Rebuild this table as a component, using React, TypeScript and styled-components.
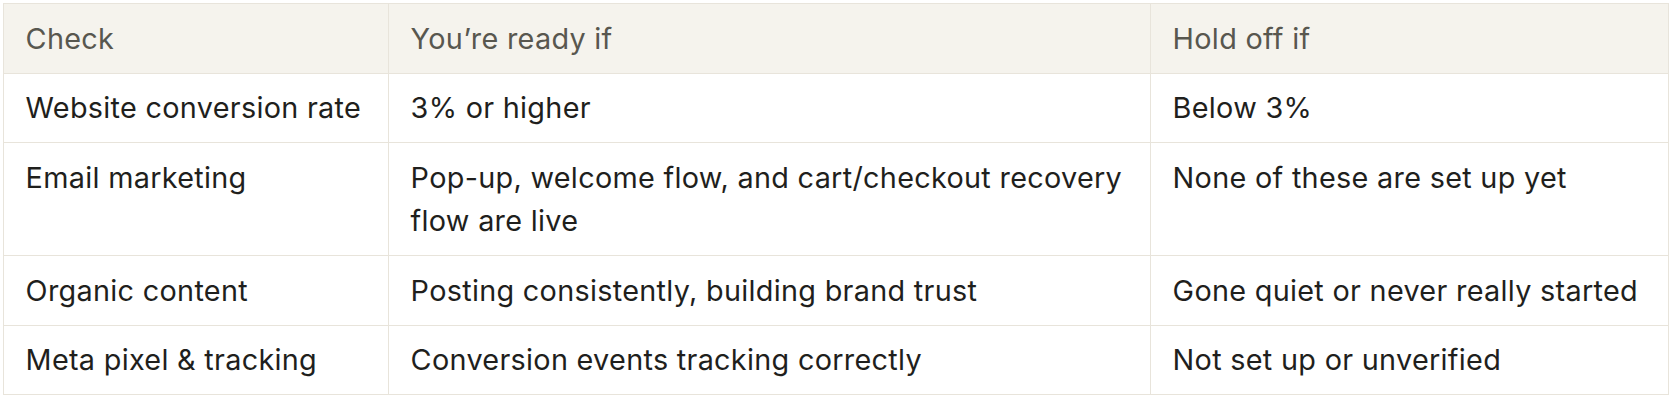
import React from "react";
import styled, { createGlobalStyle } from "styled-components";

const Global = createGlobalStyle`
  html, body { margin: 0; padding: 0; background: #ffffff; }
  body { font-family: Inter, "Liberation Sans", Arial, sans-serif; }
`;

const Wrapper = styled.div`
  padding: 3px 0 0 3px;
  width: 1674px;
  box-sizing: border-box;
`;

const Table = styled.table`
  width: 1665px;
  table-layout: fixed;
  border-collapse: collapse;
  border: 1.8px solid #e8e4db;
  font-size: 28.8px;
  line-height: 43.2px;
  letter-spacing: 0.3px;
`;

const HeadCell = styled.th`
  background: #f5f3ed;
  color: #58574f;
  font-weight: 400;
  text-align: left;
  padding: 12.7px 21.6px;
  border: 1.8px solid #e8e4db;
`;

const Cell = styled.td`
  color: #1f1f1d;
  text-align: left;
  vertical-align: top;
  padding: 12.7px 21.6px;
  border: 1.8px solid #e8e4db;
`;

const rows: [string, string, string][] = [
  ["Website conversion rate", "3% or higher", "Below 3%"],
  [
    "Email marketing",
    "Pop-up, welcome flow, and cart/checkout recovery flow are live",
    "None of these are set up yet",
  ],
  ["Organic content", "Posting consistently, building brand trust", "Gone quiet or never really started"],
  ["Meta pixel & tracking", "Conversion events tracking correctly", "Not set up or unverified"],
];

export default function App() {
  return (
    <Wrapper>
      <Global />
      <Table>
        <colgroup>
          <col style={{ width: 385 }} />
          <col style={{ width: 762 }} />
          <col style={{ width: 518 }} />
        </colgroup>
        <thead>
          <tr>
            <HeadCell>Check</HeadCell>
            <HeadCell>You’re ready if</HeadCell>
            <HeadCell>Hold off if</HeadCell>
          </tr>
        </thead>
        <tbody>
          {rows.map((r) => (
            <tr key={r[0]}>
              {r.map((c, i) => (
                <Cell key={i}>{c}</Cell>
              ))}
            </tr>
          ))}
        </tbody>
      </Table>
    </Wrapper>
  );
}
